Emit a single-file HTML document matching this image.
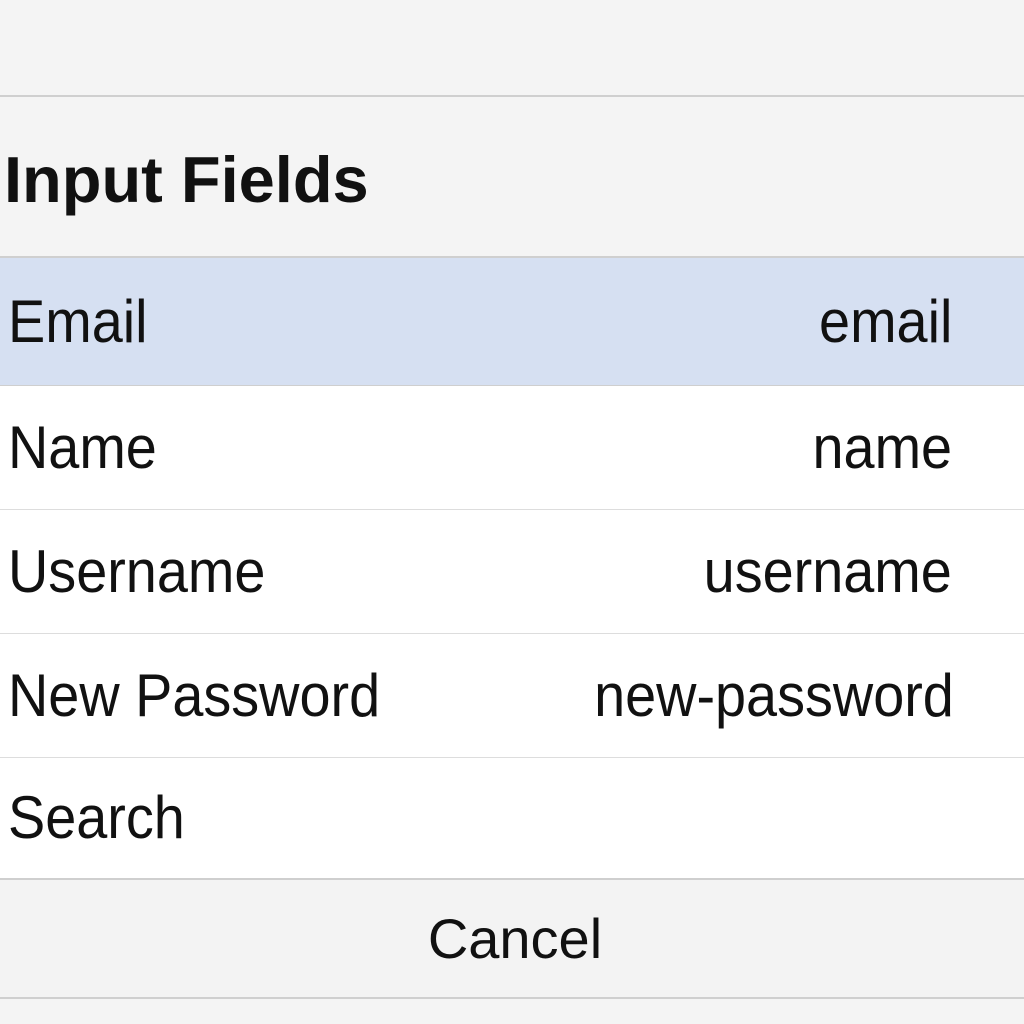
<!DOCTYPE html>
<html><head><style>
body{margin:0;width:1024px;height:1024px;background:#f4f4f4;font-family:"Liberation Sans",sans-serif;color:#111;position:relative;overflow:hidden}
.a{position:absolute;left:0;width:1024px}
.line{position:absolute;left:0;width:1024px;height:2px;background:#cfcfcf}
.row{position:absolute;left:0;width:1024px;background:#fff;font-size:60px}
.row span{position:absolute;top:50%;transform:translateY(-50%) scaleX(.93);white-space:nowrap;line-height:1}
.l{left:8px;transform-origin:left center!important}
.r{right:72px;transform-origin:right center!important}
</style></head><body>
<div class="line" style="top:95px"></div>
<div class="a" style="top:97px;height:160px;background:#f4f4f4"><div style="position:absolute;left:4px;top:50%;transform:translateY(-46%);font-weight:bold;font-size:65px;line-height:1">Input Fields</div></div>
<div class="line" style="top:256px"></div>
<div class="row" style="top:258px;height:127px;background:#d6e0f2"><span class="l">Email</span><span class="r">email</span></div>
<div class="line" style="top:385px;height:1px"></div>
<div class="row" style="top:386px;height:123px"><span class="l">Name</span><span class="r">name</span></div>
<div class="line" style="top:509px;height:1px;background:#ddd"></div>
<div class="row" style="top:510px;height:123px"><span class="l">Username</span><span class="r">username</span></div>
<div class="line" style="top:633px;height:1px;background:#ddd"></div>
<div class="row" style="top:634px;height:123px"><span class="l">New Password</span><span class="r" style="right:70px">new-password</span></div>
<div class="line" style="top:757px;height:1px;background:#ddd"></div>
<div class="row" style="top:758px;height:120px"><span class="l">Search</span></div>
<div class="line" style="top:878px"></div>
<div class="a" style="top:880px;height:117px;background:#f3f3f3;text-align:center;font-size:56px;line-height:117px;padding-left:6px;box-sizing:border-box">Cancel</div>
<div class="line" style="top:997px"></div>
</body></html>
